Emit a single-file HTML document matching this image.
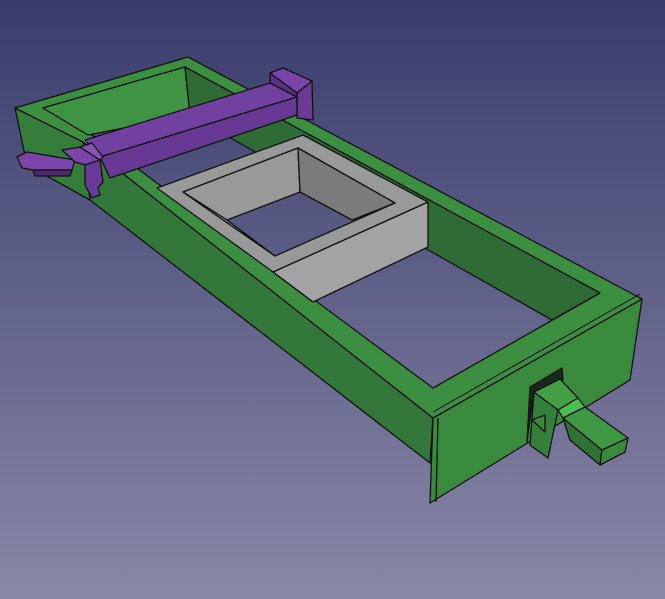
<!DOCTYPE html>
<html><head><meta charset="utf-8"><style>html,body{margin:0;padding:0;overflow:hidden}svg{display:block}</style></head>
<body>
<svg width="665" height="599" viewBox="0 0 665 599" xmlns="http://www.w3.org/2000/svg">
<defs>
<linearGradient id="bg" gradientUnits="userSpaceOnUse" x1="0" y1="0" x2="0" y2="599">
<stop offset="0" stop-color="#393c6c"/><stop offset="1" stop-color="#8a88a8"/>
</linearGradient>
</defs>
<rect width="665" height="599" fill="url(#bg)"/>
<g stroke="#111" stroke-width="1.3" stroke-linejoin="round">
<polygon points="83,142 433,418 430,463 90,200" fill="#33773a"/>
<polygon points="15,108 83,142 90,200 27,165" fill="#367c3a"/>
<polygon points="433,418 642,299 630,380 430,503" fill="#3a8a3e"/>
<line x1="438" y1="418" x2="436" y2="502"/>
<polygon points="15,108 188,57 642,299 433,418 83,142" fill="#3c8f40"/>
<line x1="433" y1="412" x2="640" y2="294" stroke-width="1"/>
<polygon points="43,108 185,67 600,293 433,388 95,137" fill="url(#bg)"/>
<polygon points="43,108 185,67 190,115 88,135" fill="#3e9442"/>
<polygon points="185,67 600,293 552,320 190,115" fill="#2f6c35"/>
<!-- gray box -->
<polygon points="273,272 428,202 428,247 313,302" fill="#a3a3a3"/>
<polygon points="157,188 303,135 428,202 273,272" fill="#999"/>
<polygon points="183,192 298,148 395,203 275,256" fill="url(#bg)"/>
<polygon points="183,192 298,148 300,192 227,220" fill="#999"/>
<polygon points="298,148 395,203 352,220 300,192" fill="#7b7b7b"/>
<polygon points="183,192 227,220 275,256" fill="#999"/>
<line x1="273" y1="272" x2="313" y2="302"/>
<!-- purple bar -->
<polygon points="270,73 283,68 312,81 297,93" fill="#7b44a8"/>
<polygon points="270,73 297,93 297,100 270,84" fill="#5a2f86"/>
<polygon points="297,93 312,81 313,120 297,118" fill="#6b3a96"/>
<polygon points="85,140 270,83 297,97 100,157" fill="#7240a0"/>
<polygon points="100,157 297,97 297,115 110,178" fill="#673894"/>
<!-- hinge -->
<polygon points="17,157 27,152 75,160 72,170 33,170 22,168" fill="#7b44a8"/>
<polygon points="33,170 72,170 70,176 35,176" fill="#4a2870"/>
<polygon points="62,150 80,147 100,160 85,165 75,162" fill="#7b44a8"/>
<polygon points="80,147 92,143 103,157 100,160" fill="#8a52b8"/>
<polygon points="85,165 100,160 103,182 98,188 100,195 92,198 85,185" fill="#6b3a96"/>
<!-- handle -->
<polygon points="527,442 530,387 562,368 563,380 533,397" fill="#1a2a1a"/>
<polygon points="534,392 558,410 548,458 530,445" fill="#34803a"/>
<polygon points="532,420 545,415 545,432" fill="#3a8a3e"/>
<polygon points="563,418 602,450 600,465 570,440" fill="#2f7234"/>
<polygon points="534,392 560,379 578,398 558,410" fill="#43a047"/>
<polygon points="558,410 578,398 585,407 563,418" fill="#4cbf50"/>
<polygon points="563,418 585,407 628,438 602,450" fill="#3f9844"/>
<polygon points="602,450 628,438 625,452 600,465" fill="#3a8a3e"/>
</g>
</svg>
</body></html>
